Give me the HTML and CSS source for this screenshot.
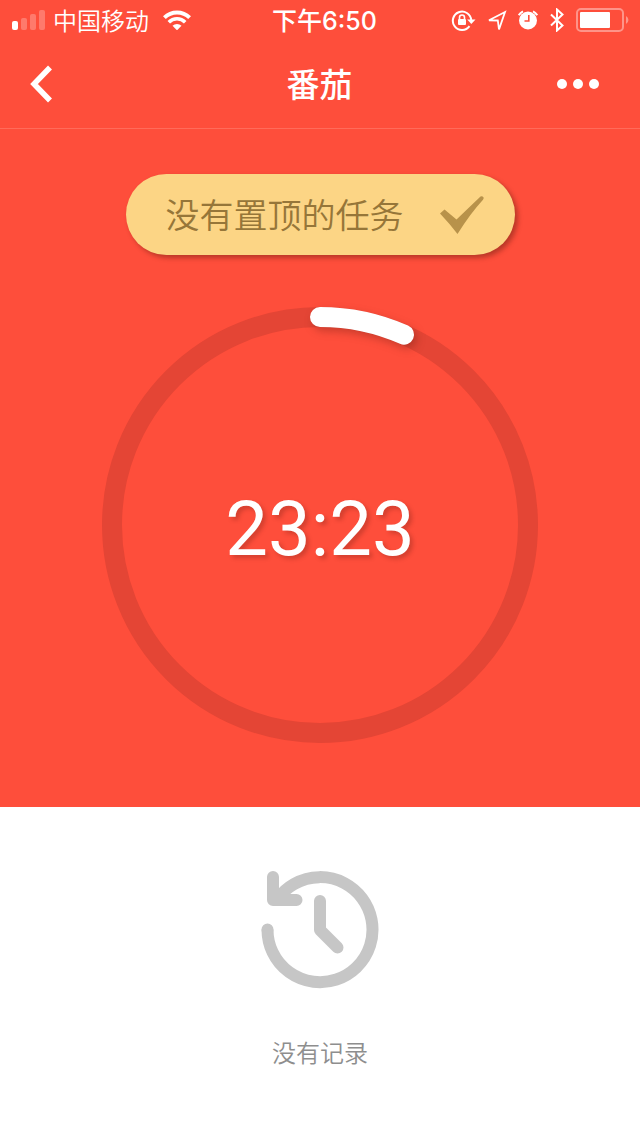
FILE: index.html
```html
<!DOCTYPE html>
<html lang="zh-CN">
<head>
<meta charset="utf-8">
<meta name="viewport" content="width=device-width, initial-scale=1">
<title>番茄</title>
<link rel="stylesheet" href="styles.css">
</head>
<body>
<div class="screen">
  <div class="focus">
    <div class="status">
      <div class="status-left">
        <svg class="icon" width="34" height="22" viewBox="0 0 34 22" fill="#fff" aria-hidden="true">
          <rect x="0" y="12" width="6" height="9" rx="2"/>
          <g opacity=".25">
            <rect x="9" y="9" width="6" height="12" rx="2"/>
            <rect x="18" y="5" width="6" height="16" rx="2"/>
            <rect x="27" y="1" width="6" height="20" rx="2"/>
          </g>
        </svg>
        <span class="carrier">中国移动</span>
        <svg class="icon wifi" width="28" height="20" viewBox="0 0 28 20" fill="none" stroke="#fff" stroke-width="4" aria-hidden="true">
          <path d="M1.4 7.6A18 18 0 0 1 26.600 7.600"/>
          <path d="M5.800 12.200A11.600 11.600 0 0 1 22.200 12.200" stroke-width="3.600"/>
          <path d="M14 20.300L9.500 15.800A6.400 6.400 0 0 1 18.500 15.800Z" fill="#fff" stroke="none"/>
        </svg>
      </div>
      <time class="clock">下午6:50</time>
      <div class="status-right">
        <svg class="icon" width="25" height="24" viewBox="0 0 25 24" aria-hidden="true">
          <path d="M18.500 18.200A9.200 9.200 0 1 1 20.200 12" fill="none" stroke="#fff" stroke-width="2"/>
          <path d="M16.200 11.500H24.500L20.300 16Z" fill="#fff"/>
          <rect x="7" y="11" width="8" height="6" rx="1" fill="#fff"/>
          <path d="M8.500 11V9.500A2.500 2.500 0 0 1 13.500 9.500V11" fill="none" stroke="#fff" stroke-width="1.600"/>
        </svg>
        <svg class="icon" width="20" height="22" viewBox="0 0 20 22" fill="none" stroke="#fff" stroke-width="1.800" aria-hidden="true">
          <path d="M2 11.300L18 3L12 20.500L10.800 11.500Z"/>
        </svg>
        <svg class="icon" width="20" height="20" viewBox="0 0 20 20" aria-hidden="true">
          <circle cx="10" cy="10.500" r="9" fill="#fff"/>
          <path d="M.8 5.200A11 11 0 0 1 5 1.400M15 1.400A11 11 0 0 1 19.200 5.200" fill="none" stroke="#fff" stroke-width="2"/>
          <path d="M10.800 5V11H6.500" fill="none" stroke="#fd4f3c" stroke-width="1.600"/>
        </svg>
        <svg class="icon" width="16" height="24" viewBox="0 0 16 24" fill="none" stroke="#fff" stroke-width="2" aria-hidden="true">
          <path d="M2 6.500L13.500 17.500L8 22.500V1.500L13.500 6.500L2 17.500"/>
        </svg>
        <svg class="icon battery" width="53" height="24" viewBox="0 0 53 24" aria-hidden="true">
          <rect x="1" y="1" width="46" height="22" rx="4" fill="none" stroke="#fff" stroke-opacity=".4" stroke-width="2"/>
          <rect x="4" y="4" width="30" height="16" rx="1" fill="#fff"/>
          <path d="M50 8A4.500 4.500 0 0 1 50 16Z" fill="#fff" fill-opacity=".4"/>
        </svg>
      </div>
    </div>

    <header class="nav">
      <button class="nav-button" type="button" aria-label="返回">
        <svg class="icon" width="24" height="40" viewBox="0 0 24 40" fill="none" stroke="#fff" stroke-width="5.500" aria-hidden="true">
          <path d="M20 3.500L4 20L20 36.500"/>
        </svg>
      </button>
      <h1 class="title">番茄</h1>
      <button class="nav-button nav-more" type="button" aria-label="更多">
        <svg class="icon" width="42" height="10" viewBox="0 0 42 10" fill="#fff" aria-hidden="true">
          <circle cx="5" cy="5" r="5"/><circle cx="21" cy="5" r="5"/><circle cx="37" cy="5" r="5"/>
        </svg>
      </button>
    </header>

    <main class="timer">
      <button class="task" type="button">
        <span class="task-name">没有置顶的任务</span>
        <svg class="icon" width="46" height="40" viewBox="0 0 46 40" fill="#b8924a" aria-hidden="true">
          <path d="M1 18.500L5.500 14.500L17.500 24.500L41.500 1.500Q43 .5 44.500 2.200Q45 3.500 44 4.800Q31 19 18.500 39Q10.500 28.500 1 18.500Z"/>
        </svg>
      </button>
      <div class="dial">
        <svg class="ring" viewBox="0 0 436 436" fill="none" stroke-width="20" aria-hidden="true">
          <circle cx="218" cy="218" r="208" stroke="#e44535"/>
          <path class="progress" d="M218 10A208 208 0 0 1 302 27.700" stroke="#fff" stroke-linecap="round"/>
        </svg>
        <time class="remaining">23:23</time>
      </div>
    </main>
  </div>

  <section class="records">
    <svg class="icon" width="120" height="120" viewBox="0 0 120 120" fill="none" stroke="#c6c6c6" stroke-width="12" stroke-linecap="round" stroke-linejoin="round" aria-hidden="true">
      <path d="M7.500 59.500A52.500 52.500 0 1 0 17 29.500" stroke-linecap="butt"/>
      <path d="M7.500 59.500V59.600M13 7V30H36.500M60 31V60L77.500 77.500"/>
    </svg>
    <p class="empty">没有记录</p>
  </section>
</div>
</body>
</html>
```
FILE: styles.css
```css
* {
  box-sizing: border-box;
}

body {
  margin: 0;
  background: #fff;
  font-family: "Noto Sans CJK SC", sans-serif;
}

button {
  margin: 0;
  padding: 0;
  border: 0;
  background: none;
  color: inherit;
  font: inherit;
  cursor: pointer;
}

.icon {
  display: block;
  flex: none;
}

.screen {
  display: flex;
  flex-direction: column;
  min-height: 100vh;
}

.focus {
  background: #fe4e3b;
  color: #fff;
}

.status {
  display: grid;
  grid-template-columns: 1fr auto 1fr;
  align-items: center;
  height: 40px;
  padding: 0 11px 0 12px;
  font-size: 24px;
  line-height: 40px;
}

.status-left,
.status-right {
  display: flex;
  align-items: center;
}

.carrier {
  margin-left: 7px;
  font-weight: 350;
}

.wifi {
  margin-left: 14px;
}

.status-right {
  justify-content: flex-end;
  gap: 11px;
}

.clock {
  padding: 2px 0 0 8px;
  font-family: Inter, "Noto Sans CJK SC", sans-serif;
  font-size: 25px;
  font-weight: 500;
  line-height: 38px;
}

.nav {
  display: grid;
  grid-template-columns: 1fr auto 1fr;
  align-items: center;
  height: 89px;
  padding: 0 41px 0 30px;
  border-bottom: 1px solid #ff6b5a;
}

.nav-button {
  justify-self: start;
}

.nav-more {
  justify-self: end;
}

.title {
  margin: 0;
  padding: 0 0 2px 10px;
  font-size: 33px;
  font-weight: 500;
  line-height: 48px;
}

.timer {
  display: flex;
  flex-direction: column;
  align-items: center;
  gap: 52px;
  padding: 45px 24px 64px;
}

.task {
  display: flex;
  align-items: center;
  gap: 35px;
  height: 81px;
  padding: 0 30px 0 40px;
  border-radius: 41px;
  background: #fcd585;
  box-shadow: 3px 3px 5px rgba(80, 20, 10, .4);
  color: #967639;
  font-size: 34px;
  font-weight: 350;
}

.task-name {
  padding-bottom: 3px;
}

.dial {
  display: grid;
  place-items: center;
  width: 100%;
  max-width: 436px;
}

.ring,
.remaining {
  grid-area: 1 / 1;
}

.ring {
  display: block;
  width: 100%;
  overflow: visible;
}

.progress {
  filter: drop-shadow(3px 4px 4px rgba(80, 20, 10, .3));
}

.remaining {
  padding-top: 8px;
  font-family: Roboto, sans-serif;
  font-size: 76px;
  line-height: 88px;
  text-shadow: 3px 3px 4px rgba(80, 20, 10, .25);
}

.records {
  display: flex;
  flex: 1;
  flex-direction: column;
  align-items: center;
  gap: 44px;
  padding: 63px 24px 40px;
}

.empty {
  margin: 0;
  color: #8e8e8e;
  font-size: 24px;
  font-weight: 350;
  line-height: 36px;
}
```
